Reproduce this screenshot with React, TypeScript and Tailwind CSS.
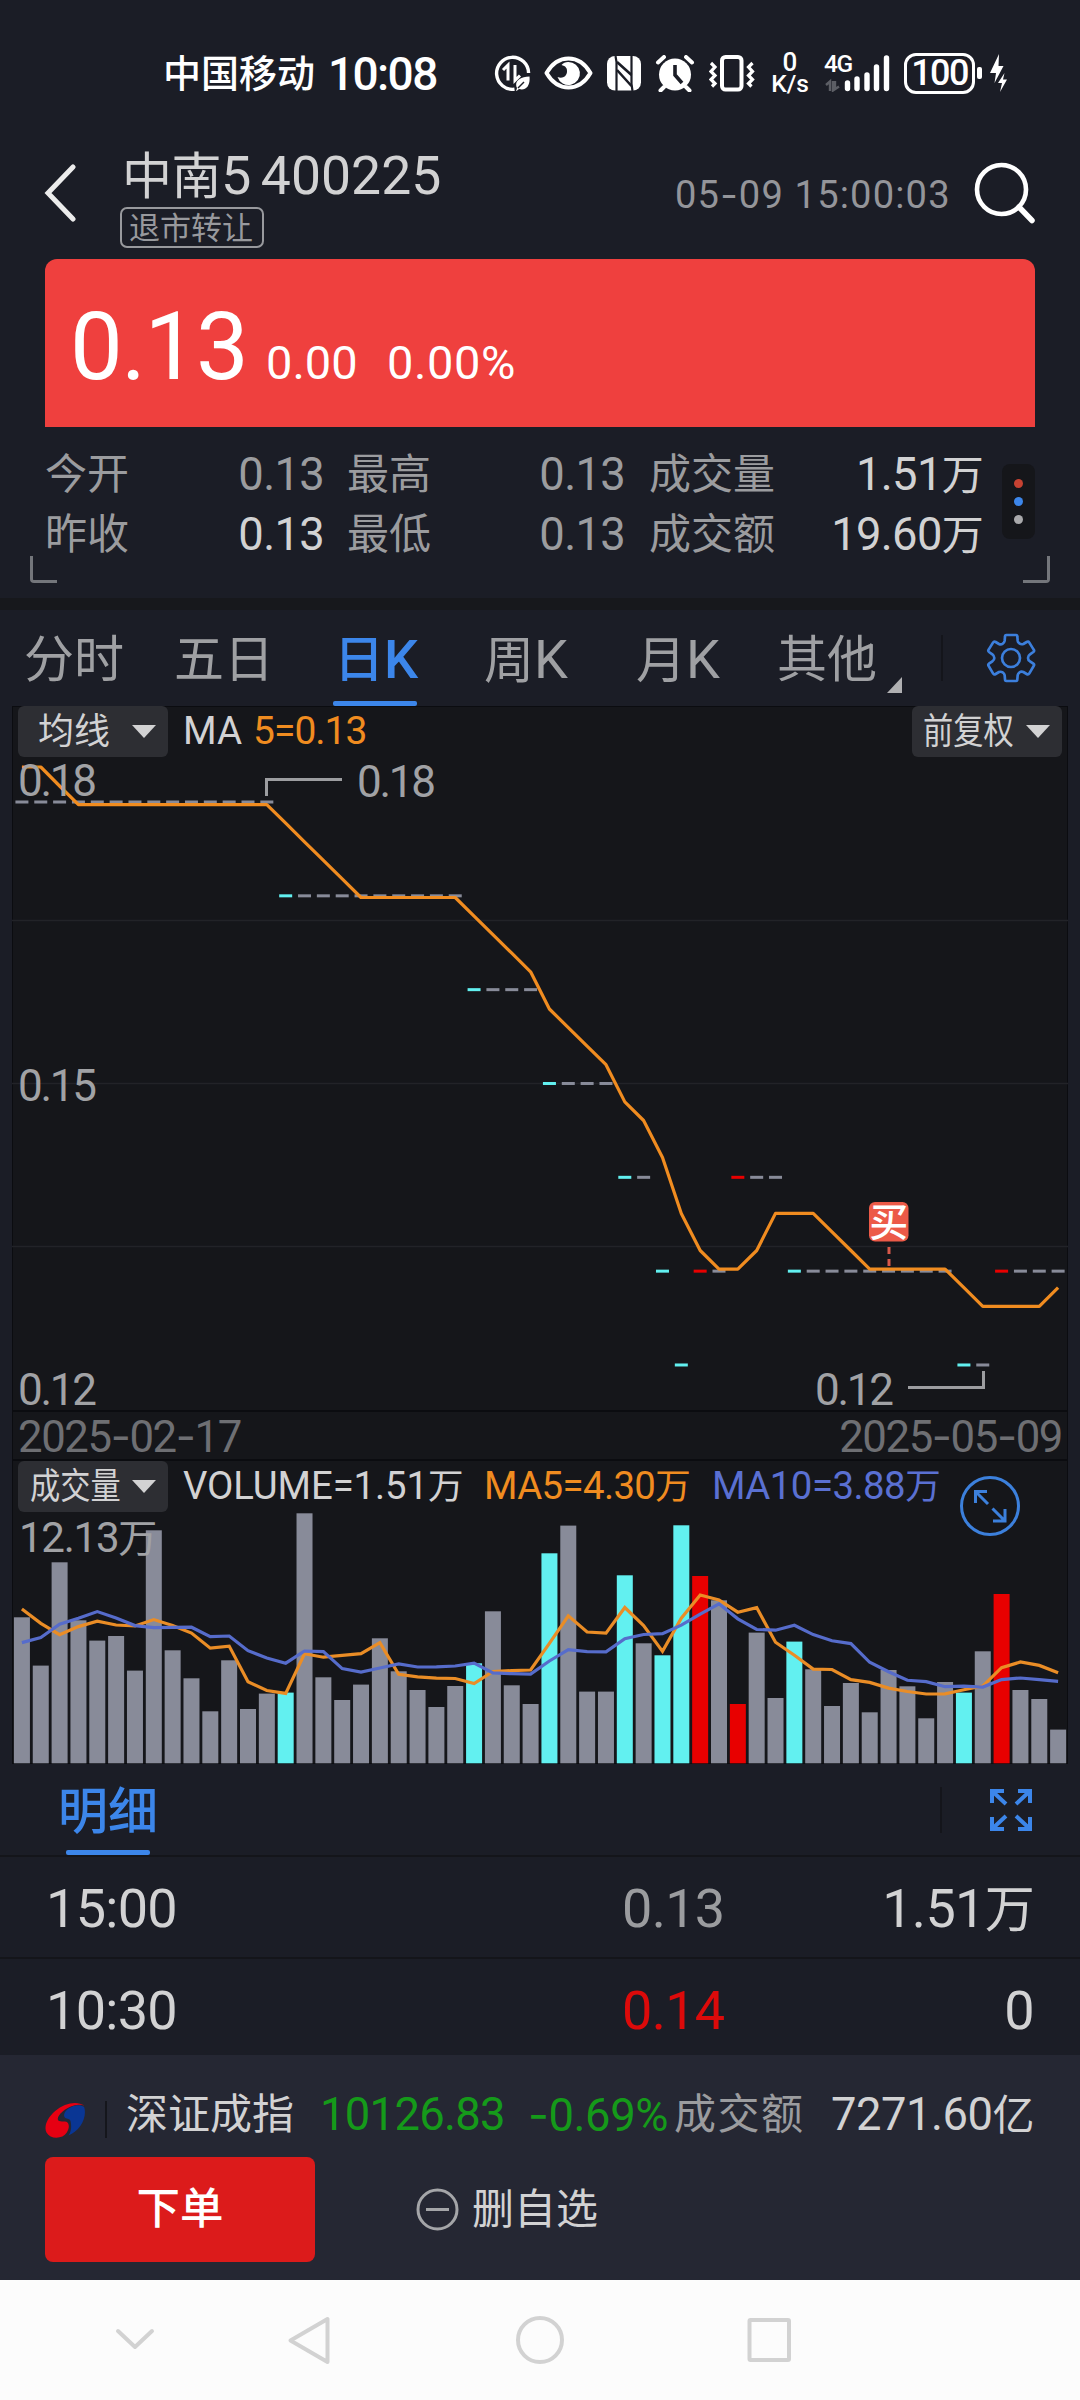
import React from 'react';

const CANDLE_PITCH = 18.84;
const CHART_LEFT = 12.5;

type Dir = 'flat' | 'down' | 'up';

// runs of equal closing prices: [price, number of days, direction of the first day]
const PRICE_RUNS: [number, number, Dir][] = [
  [0.18, 14, 'flat'],
  [0.17, 10, 'down'],
  [0.16, 4, 'down'],
  [0.15, 4, 'down'],
  [0.14, 2, 'down'],
  [0.13, 1, 'down'],
  [0.12, 1, 'down'],
  [0.13, 2, 'up'],
  [0.14, 3, 'up'],
  [0.13, 9, 'down'],
  [0.12, 2, 'down'],
  [0.13, 4, 'up'],
];

const days = PRICE_RUNS.flatMap(([price, count, dir]) =>
  Array.from({ length: count }, (_, i) => ({ price, dir: i === 0 ? dir : ('flat' as Dir) }))
);

const volumes = [
  146, 97.7, 201, 143, 122.7, 127.3, 92.7, 233, 113, 85, 52, 103, 54.3, 69.7, 70.7, 250, 86, 63.3, 78.7,
  125, 92, 73.3, 56.3, 77.3, 100, 152, 78, 59.3, 210, 237.7, 71.7, 71.7, 188, 120, 108, 238, 187.3, 163,
  59.3, 130.7, 65.3, 121.7, 94, 57.3, 80.3, 51, 93.3, 77, 45, 81.3, 70.7, 112, 169.3, 73.3, 64.3, 33.7,
];

const COLORS: Record<Dir, string> = { flat: '#888b99', down: '#62f0f0', up: '#e80000' };

const centerX = (i: number) => CHART_LEFT + CANDLE_PITCH * (i + 0.5);
const priceY = (p: number) => 802 + (0.18 - p) * 9383;

const movingAverage = (values: number[], size: number, seed: number[]) =>
  values.map((_, i) =>
    i < seed.length ? seed[i] : values.slice(i - size + 1, i + 1).reduce((a, b) => a + b, 0) / size
  );

const priceMA = movingAverage(days.map(d => d.price), 5, [0.18405, 0.18405, 0.182, 0.18]);
const volMA5 = movingAverage(volumes, 5, [154.3, 140, 128.7, 136.7]);
const volMA10 = movingAverage(volumes, 10, [120.7, 125.7, 139, 145, 151.7, 145.3, 137.7, 135.7, 136]);

const toPoints = (values: number[], y: (v: number) => number) =>
  values.map((v, i) => `${centerX(i).toFixed(1)},${y(v).toFixed(1)}`).join(' ');

// Latin digits sit slightly larger than the Chinese characters around them
const Mix = ({ children }: { children: string }) => (
  <>
    {children.split(/([\u4e00-\u9fff]+|-)/).filter(Boolean).map((part, i) =>
      /[\u4e00-\u9fff]/.test(part) ? (
        <span key={i}>{part}</span>
      ) : part === '-' ? (
        <span key={i} className="font-[Inter] text-[1.08em]">-</span>
      ) : (
        <span key={i} className="text-[1.08em]">{part}</span>
      )
    )}
  </>
);

const StatusBar = () => (
  <div className="h-[146px] shrink-0 flex items-center text-white pl-[163px]">
    <span className="w-[165px] pt-[2px] text-[38px] font-medium whitespace-nowrap">中国移动</span>
    <span className="w-[166px] pt-[2px] text-[46px] font-medium tracking-[-1.6px]">10:08</span>
    <svg className="w-[37px] h-[36px] mr-[13px]" viewBox="494 55 37 36" fill="none">
      <path d="M514.5 89.2A16 16 0 1 1 528.6 73" stroke="#fff" strokeWidth="3.4" />
      <path d="M503 70l5-5V80.500M515 65v15.500l5-5" stroke="#fff" strokeWidth="3" />
      <path d="M517 88c-3-6 2-11 12.500-11.500 1 9-3.500 14.500-10.500 12.500l-3 2.500z" fill="#fff" />
      <path d="M518 88l6-6" stroke="#1b1d26" strokeWidth="1.500" />
    </svg>
    <svg className="w-[49px] h-[34px] mr-[14px]" viewBox="545 56 49 34" fill="none">
      <path d="M547.500 73c5-8.500 13-14.500 22-14.500s17 6 22 14.500c-5 8.500-13 14.500-22 14.500s-17-6-22-14.500z" stroke="#fff" strokeWidth="4" strokeLinejoin="round" />
      <path d="M569 62a11.500 11.500 0 1 1-10.500 15c5 2 9-.5 9.500-5 .4-4-1.500-6-5.500-7 1.500-2 4-3 6.500-3z" fill="#fff" />
    </svg>
    <svg className="w-[34px] h-[36px] mr-[14px]" viewBox="608 55 34 36">
      <rect x="608" y="56" width="34" height="34.500" rx="8" fill="#fff" />
      <path d="M616.500 56l1 6v29M633.500 91l-1-7V56" stroke="#1b1d26" strokeWidth="2.200" fill="none" />
      <path d="M618 62l14.500 13M618 70l14.500 16" stroke="#1b1d26" strokeWidth="2.600" />
    </svg>
    <svg className="w-[40px] h-[37px] mr-[14px]" viewBox="655 55 40 37">
      <circle cx="675" cy="74.500" r="16" fill="#fff" />
      <path d="M658 62.500l6-5.500M692 62.500l-6-5.500M664 87l-3.500 3.500M686 87l3.500 3.500" stroke="#fff" strokeWidth="4" strokeLinecap="round" />
      <path d="M675 65v10l7 8" stroke="#1b1d26" strokeWidth="3.600" fill="none" />
    </svg>
    <svg className="w-[46px] h-[37px] mr-[17px]" viewBox="709 55 46 37" fill="none" stroke="#fff">
      <rect x="722" y="57" width="19.500" height="32.500" rx="3.500" strokeWidth="4" />
      <path d="M711 63l4 4-4 4.500 4 4-4 4 4 4-3 3M752.500 63l-4 4 4 4.500-4 4 4 4-4 4 3 3" strokeWidth="3.200" />
    </svg>
    <div className="w-[36px] flex flex-col items-center mr-[16px] font-medium">
      <span className="text-[26px] h-[22px] leading-[22px]">0</span>
      <span className="text-[24.5px] h-[22px] leading-[22px]">K/s</span>
    </div>
    <div className="relative w-[66px] h-[37px] mr-[14px]">
      <span className="absolute left-0 -top-[1px] text-[24.5px] font-medium leading-[20px] tracking-[-1.5px]">4G</span>
      <svg className="w-[66px] h-[37px]" viewBox="825 55 66 37">
        <path d="M827 85l4-3.500V91M834 81v9.500l6-4M836 81v9" stroke="#5c5e65" strokeWidth="2.400" fill="none" />
        <path d="M848.500 83v5.500M858 79v9.500M868 75v13.500M877.500 67v21.500M887.500 58v30.500" stroke="#fff" strokeWidth="5.400" strokeLinecap="round" />
      </svg>
    </div>
    <div className="flex items-center">
      <div className="w-[71px] h-[41px] border-[3px] border-white rounded-[12px] flex items-center justify-center text-[36px] font-medium tracking-[-1.6px]">
        100
      </div>
      <div className="w-[5px] h-[12px] ml-[2px] rounded-[2px] bg-white" />
      <svg className="w-[17px] h-[38px] ml-[8px]" viewBox="991 54 17 38" fill="#fff">
        <path d="M1000 54l-9 19h6l-1.500 10 9-17h-5z" />
        <path d="M1005.500 73l-6.500 10h4l-2 9 7-12.500h-4z" />
      </svg>
    </div>
  </div>
);

const Header = () => (
  <div className="h-[113px] shrink-0 flex pl-[44px]">
    <svg className="w-[33px] h-[58px] mt-[18px]" viewBox="0 0 33 58" fill="none" stroke="#ececec" strokeWidth="5">
      <path d="M29 3L4 29l25 26" strokeLinecap="round" />
    </svg>
    <div className="w-[598px] pl-[43px]">
      <div className="h-[56px] mt-[1px] pt-[1px] pl-[2px] flex items-center text-[50px] text-[#d2d2d3] whitespace-nowrap">
        <span className="tracking-[-0.5px]"><Mix>中南5</Mix></span>
        <span className="ml-[10px] text-[53.5px]">400225</span>
      </div>
      <div className="w-[144px] h-[41px] mt-[4px] border-2 border-[#98999d] rounded-[7px] flex items-center justify-center pt-[1px] pr-[2px] text-[31px] text-[#98999d]">
        退市转让
      </div>
    </div>
    <div className="w-[275px] pt-[28px] text-[35.300px] text-[#94959a] tracking-[1.15px] whitespace-nowrap leading-[40px]">
      <Mix>05-09 15:00:03</Mix>
    </div>
    <svg className="w-[62px] h-[62px] ml-[23px] mt-[16px]" viewBox="973 162 62 62" fill="none" stroke="#fff" strokeLinecap="round">
      <circle cx="1001.500" cy="189.500" r="24.500" strokeWidth="4.600" />
      <path d="M1019 207l13 13.500" strokeWidth="5.500" />
    </svg>
  </div>
);

const stats = [
  [
    { label: '今开', value: '0.13', tone: 'text-[#9b9c9f]' },
    { label: '最高', value: '0.13', tone: 'text-[#9b9c9f]' },
    { label: '成交量', value: '1.51万', tone: 'text-[#d2d2d3]' },
  ],
  [
    { label: '昨收', value: '0.13', tone: 'text-[#d2d2d3]' },
    { label: '最低', value: '0.13', tone: 'text-[#9b9c9f]' },
    { label: '成交额', value: '19.60万', tone: 'text-[#d2d2d3]' },
  ],
];

const Quote = () => (
  <>
    <div className="mx-[45px] h-[168px] shrink-0 bg-[#ef403e] rounded-t-[12px] text-white flex items-baseline pl-[25px] pt-[41px]">
      <span className="text-[94px] w-[196px] tracking-[-1.5px]">0.13</span>
      <span className="text-[47px] w-[121px]">0.00</span>
      <span className="text-[47px] tracking-[0.6px]">0.00%</span>
    </div>
    <div className="relative h-[171px] shrink-0 flex pt-[18px] pl-[45px]">
      <div className="w-[938px]">
        {stats.map((row, i) => (
          <div key={i} className="h-[60px] flex items-center text-[42px] text-[#9b9c9f] whitespace-nowrap">
            {row.map((cell, j) => (
              <div
                key={cell.label}
                className={`flex justify-between items-center ${j === 0 ? 'w-[279px]' : j === 1 ? 'w-[278px] ml-[23px]' : 'w-[334px] ml-[24px]'}`}
              >
                <span>{cell.label}</span>
                <span className={`tracking-[-0.7px] ${cell.tone}`}><Mix>{cell.value}</Mix></span>
              </div>
            ))}
          </div>
        ))}
      </div>
      <div className="ml-[19px] mt-[19px] w-[33px] h-[75px] rounded-[8px] bg-[#15161a] flex flex-col items-center justify-center gap-[9px]">
        <div className="w-[9px] h-[9px] rounded-full bg-[#c64232]" />
        <div className="w-[9px] h-[9px] rounded-full bg-[#3c86ea]" />
        <div className="w-[9px] h-[9px] rounded-full bg-[#a9a9ab]" />
      </div>
      <div className="absolute left-[30px] bottom-[15px] w-[27px] h-[27px] border-l-[3px] border-b-[3px] border-[#74767b] rounded-bl-[4px]" />
      <div className="absolute right-[30px] bottom-[15px] w-[27px] h-[27px] border-r-[3px] border-b-[3px] border-[#74767b] rounded-br-[4px]" />
    </div>
  </>
);

const Tabs = () => (
  <div className="h-[96px] shrink-0 flex items-center text-[50px] text-[#9fa0a3] pl-[24px] whitespace-nowrap">
    <span className="w-[150px] pt-[3px]">分时</span>
    <span className="w-[159px] pt-[3px]">五日</span>
    <div className="w-[84px] h-[96px] flex flex-col text-[#3c86ea]">
      <div className="flex-1 flex items-center justify-center pt-[3px] pl-[2px] font-medium"><Mix>日K</Mix></div>
      <div className="h-[5px] -mt-[5px] bg-[#3c86ea] rounded-[2px]" />
    </div>
    <span className="w-[152px] pt-[3px] pl-[67px]"><Mix>周K</Mix></span>
    <span className="w-[152px] pt-[3px] pl-[67px]"><Mix>月K</Mix></span>
    <span className="w-[100px] pt-[3px] ml-[56px]">其他</span>
    <svg className="w-[16px] h-[16px] ml-[9px] mt-[54px]" viewBox="0 0 16 16"><path d="M16 0v16H1z" fill="#b0b0b2" /></svg>
    <div className="w-[2px] h-[46px] ml-[39px] bg-[#14151b]" />
    <svg className="w-[80px] h-[80px] ml-[27px] mt-[4px]" viewBox="0 0 240 240" fill="none" stroke="#3c7fdc" strokeWidth="8" strokeLinejoin="round">
      <path d="M109 45h29q4 0 4 5l1 12q1 6 6 9t11 1l10-6q5-3 8 2l13 21q3 4-1 7l-10 7q-6 4-6 11t6 10l10 7q4 3 1 7l-13 22q-3 5-8 2l-10-6q-6-3-11 1t-6 9l-1 12q0 5-4 5h-29q-4 0-4-5l-1-12q-1-6-6-9t-11-1l-10 6q-5 3-8-2l-13-22q-3-4 1-7l10-7q6-4 6-10t-6-11l-10-7q-4-3-1-7l13-21q3-5 8-2l10 6q6 3 11-1t6-9l1-12q0-5 4-5z" />
      <circle cx="123" cy="114" r="27" />
    </svg>
  </div>
);

const DropButton = ({ label, className, narrow }: { label: string; className: string; narrow?: boolean }) => (
  <div className={`h-[51px] rounded-[6px] bg-[#2d2e33] text-[#d2d2d3] text-[36px] flex items-center justify-between whitespace-nowrap ${className}`}>
    {narrow ? <span className="w-[90px] origin-left scale-x-[0.84]">{label}</span> : <span>{label}</span>}
    <svg className="w-[24px] h-[13px]" viewBox="0 0 24 13"><path d="M0 0h24L12 13z" fill="#d2d2d3" /></svg>
  </div>
);

const PriceChart = () => (
  <div className="relative h-[704px]">
    <div className="relative z-10 h-[51px] flex items-center pl-[6px] pr-[6px]">
      <DropButton label="均线" className="w-[150px] pl-[20px] pr-[12px]" />
      <span className="ml-[15px] text-[38.500px] text-[#d2d2d3]">MA</span>
      <span className="ml-[11px] text-[39px] tracking-[-1px] text-[#f08c20]">5=0.13</span>
      <DropButton label="前复权" className="ml-auto w-[150px] pl-[11px] pr-[12px]" narrow />
    </div>
    <svg className="absolute left-0 top-0 w-full h-full overflow-visible" viewBox="12 706 1056 704" fill="none">
      {[920, 1083, 1246].map(y => (
        <path key={y} d={`M12 ${y}.500H1068`} stroke="#222328" strokeWidth="1.500" />
      ))}
      {days.map((d, i) => (
        <rect key={i} x={centerX(i) - 6.5} y={priceY(d.price) - 1.5} width="13" height="3" fill={COLORS[d.dir]} />
      ))}
      <polyline
        points={toPoints(priceMA, v => 804.6 + (0.18 - v) * 9290)}
        stroke="#f08c20"
        strokeWidth="3.200"
        strokeLinejoin="round"
      />
      <path d="M266.500 796v-16.500H342M908 1387.500h75.500V1371" stroke="#9c9da0" strokeWidth="3" />
      <g fill="#a1a2a5" fontSize="44" letterSpacing="-2.3">
        <text x="18" y="796">0.18</text>
        <text x="357" y="797">0.18</text>
        <text x="18" y="1101">0.15</text>
        <text x="18" y="1405">0.12</text>
        <text x="815" y="1405">0.12</text>
      </g>
      <path d="M889 1247v7M889 1259v7" stroke="#d8584a" strokeWidth="3" />
      <rect x="869" y="1202" width="39.500" height="39.500" rx="6" fill="#ec5a48" />
      <text x="888.700" y="1235.500" textAnchor="middle" fontSize="39" fontWeight="500" fill="#fff">买</text>
    </svg>
  </div>
);

const VolumeChart = () => (
  <div className="relative h-[303px]">
    <svg className="absolute left-0 top-0 w-full h-full" viewBox="12 1461 1056 303" fill="none">
      {volumes.map((v, i) => (
        <rect key={i} x={centerX(i) - 8} y={1763.3 - v} width="16" height={v} fill={COLORS[days[i].dir]} />
      ))}
      <polyline points={toPoints(volMA5, v => 1763.3 - v)} stroke="#ea8d26" strokeWidth="3.200" />
      <polyline points={toPoints(volMA10, v => 1763.3 - v)} stroke="#566ccb" strokeWidth="3.200" />
    </svg>
    <div className="relative h-[51px] flex items-center pl-[6px] text-[35.500px] whitespace-nowrap">
      <DropButton label="成交量" className="w-[150px] pl-[12px] pr-[12px]" narrow />
      <span className="w-[301px] ml-[15px] tracking-[-0.1px] text-[#d2d2d3]"><Mix>VOLUME=1.51万</Mix></span>
      <span className="w-[228px] tracking-[-0.6px] text-[#f08c20]"><Mix>MA5=4.30万</Mix></span>
      <span className="text-[#5a70d2] tracking-[-0.5px]"><Mix>MA10=3.88万</Mix></span>
    </div>
    <div className="relative pl-[7px] text-[39px] leading-[40px] tracking-[-1.3px] text-[#a1a2a5] mt-[6px]"><Mix>12.13万</Mix></div>
    <svg className="absolute left-[947px] top-[14px] w-[62px] h-[62px]" viewBox="0 0 62 62" fill="none" stroke="#3c80dc" strokeWidth="3">
      <circle cx="31" cy="31" r="28.500" />
      <path d="M29 29L16.500 16.500M16.500 28V16.500H28M33.500 33.500L46 46M46 34v12H34" />
    </svg>
  </div>
);

const trades = [
  { time: '15:00', price: '0.13', volume: '1.51万', tone: 'text-[#9b9c9f]', height: 'h-[102px]' },
  { time: '10:30', price: '0.14', volume: '0', tone: 'text-[#dc0a0a]', height: 'h-[98px] pb-[0px]' },
];

const Details = () => (
  <>
    <div className="h-[91px] shrink-0 flex items-center pl-[58px]">
      <div className="w-[100px] h-[91px] flex flex-col items-center text-[#3c86ea]">
        <div className="flex-1 flex items-center pt-[9px] text-[50px] font-medium">明细</div>
        <div className="w-[84px] h-[5px] bg-[#3c86ea] rounded-[2px]" />
      </div>
      <div className="w-[2px] h-[46px] ml-[782px] bg-[#14151b]" />
      <svg className="w-[44px] h-[44px] ml-[47px]" viewBox="0 0 44 44" fill="none" stroke="#3c86ea" strokeWidth="4">
        <path d="M3 15V3h12M3 3l14 13M29 3h12v12M41 3L27 16M3 29v12h12M3 41l14-13M29 41h12V29M41 41L27 28" />
      </svg>
    </div>
    {trades.map(t => (
      <div key={t.time} className={`${t.height} shrink-0 border-t-2 border-[#14151a] px-[46px] text-[50px] text-[#d2d2d3]`}>
        <div className="h-[103px] flex items-center">
          <span className="w-[576px] tracking-[-0.7px]"><Mix>{t.time}</Mix></span>
          <span className={`tracking-[-0.7px] ${t.tone}`}><Mix>{t.price}</Mix></span>
          <span className="ml-auto tracking-[-0.7px]"><Mix>{t.volume}</Mix></span>
        </div>
      </div>
    ))}
  </>
);

const BottomBar = () => (
  <div className="h-[225px] shrink-0 bg-[#252733]">
    <div className="h-[102px] pt-[18px] pl-[44px] flex items-center text-[42px] text-[#d2d2d3] whitespace-nowrap">
      <svg className="w-[43px] h-[38px] mt-[8px]" viewBox="44 54 126 118">
        <path d="M165 72c-20-16-60-10-90 16-25 22-36 48-27 67 12 22 50 21 63 0 8-13 8-25 2-31-8-7-28 2-30-10-1-14 22-34 48-42 15-5 28-4 34 0z" fill="#e60012" />
        <path d="M165 76c-16-12-42-3-55 10-9 9-10 21-2 25 8 3 13 1 15 10 3 16 2 30-7 43 36-14 59-56 49-88z" fill="#0a3694" />
      </svg>
      <div className="w-[2px] h-[37px] ml-[18px] mt-[8px] bg-[#15161c]" />
      <span className="w-[194px] ml-[19px]">深证成指</span>
      <span className="w-[208px] text-[#159a1a] tracking-[-0.7px]"><Mix>10126.83</Mix></span>
      <span className="w-[146px] text-[#159a1a] tracking-[-0.4px]"><Mix>-0.69%</Mix></span>
      <span className="text-[#9b9c9f] tracking-[1.5px]">成交额</span>
      <span className="ml-auto mr-[46px] tracking-[-0.5px]"><Mix>7271.60亿</Mix></span>
    </div>
    <div className="flex items-center pl-[45px] text-[42px] text-[#d2d2d3]">
      <div className="w-[270px] h-[105px] rounded-[8px] bg-[#dc1b1b] flex items-center justify-center text-[43.500px] font-medium text-white">
        下单
      </div>
      <svg className="w-[43px] h-[43px] ml-[101px]" viewBox="0 0 43 43" fill="none" stroke="#a4a5a8" strokeWidth="3">
        <circle cx="21.500" cy="21.500" r="19.500" />
        <path d="M10 21.500h23" />
      </svg>
      <span className="ml-[13px]">删自选</span>
    </div>
  </div>
);

const NavBar = () => (
  <div className="h-[120px] shrink-0 bg-[#fcfcfc]">
    <svg className="w-[1080px] h-[120px]" viewBox="0 0 1080 120" fill="none" stroke="#d2d2d2" strokeWidth="4" strokeLinejoin="round" strokeLinecap="round">
      <path d="M118 51l17 16 17-16" />
      <path d="M327.500 39v43L290.500 60.500z" />
      <circle cx="540" cy="60" r="22" />
      <rect x="749.500" y="40" width="39.500" height="40" rx="1" />
    </svg>
  </div>
);

const App: React.FC = () => (
  <div className="w-[1080px] h-[2400px] overflow-hidden flex flex-col bg-[#1b1d26] leading-none font-[Roboto,'Noto_Sans_CJK_SC',sans-serif]">
    <StatusBar />
    <Header />
    <Quote />
    <div className="h-[12px] shrink-0 bg-[#17181c]" />
    <Tabs />
    <div className="h-[1058px] shrink-0 ml-[12px] mr-[12px] bg-[#15161a] outline-1 -outline-offset-1 outline-[#0b0c10]">
      <PriceChart />
      <div className="h-[51px] border-y-2 border-[#0b0c10] pt-[4px] flex items-center justify-between px-[6px] text-[40.500px] text-[#6e6f73] tracking-[-1.4px]">
        <span><Mix>2025-02-17</Mix></span>
        <span><Mix>2025-05-09</Mix></span>
      </div>
      <VolumeChart />
    </div>
    <Details />
    <BottomBar />
    <NavBar />
  </div>
);

export default App;
